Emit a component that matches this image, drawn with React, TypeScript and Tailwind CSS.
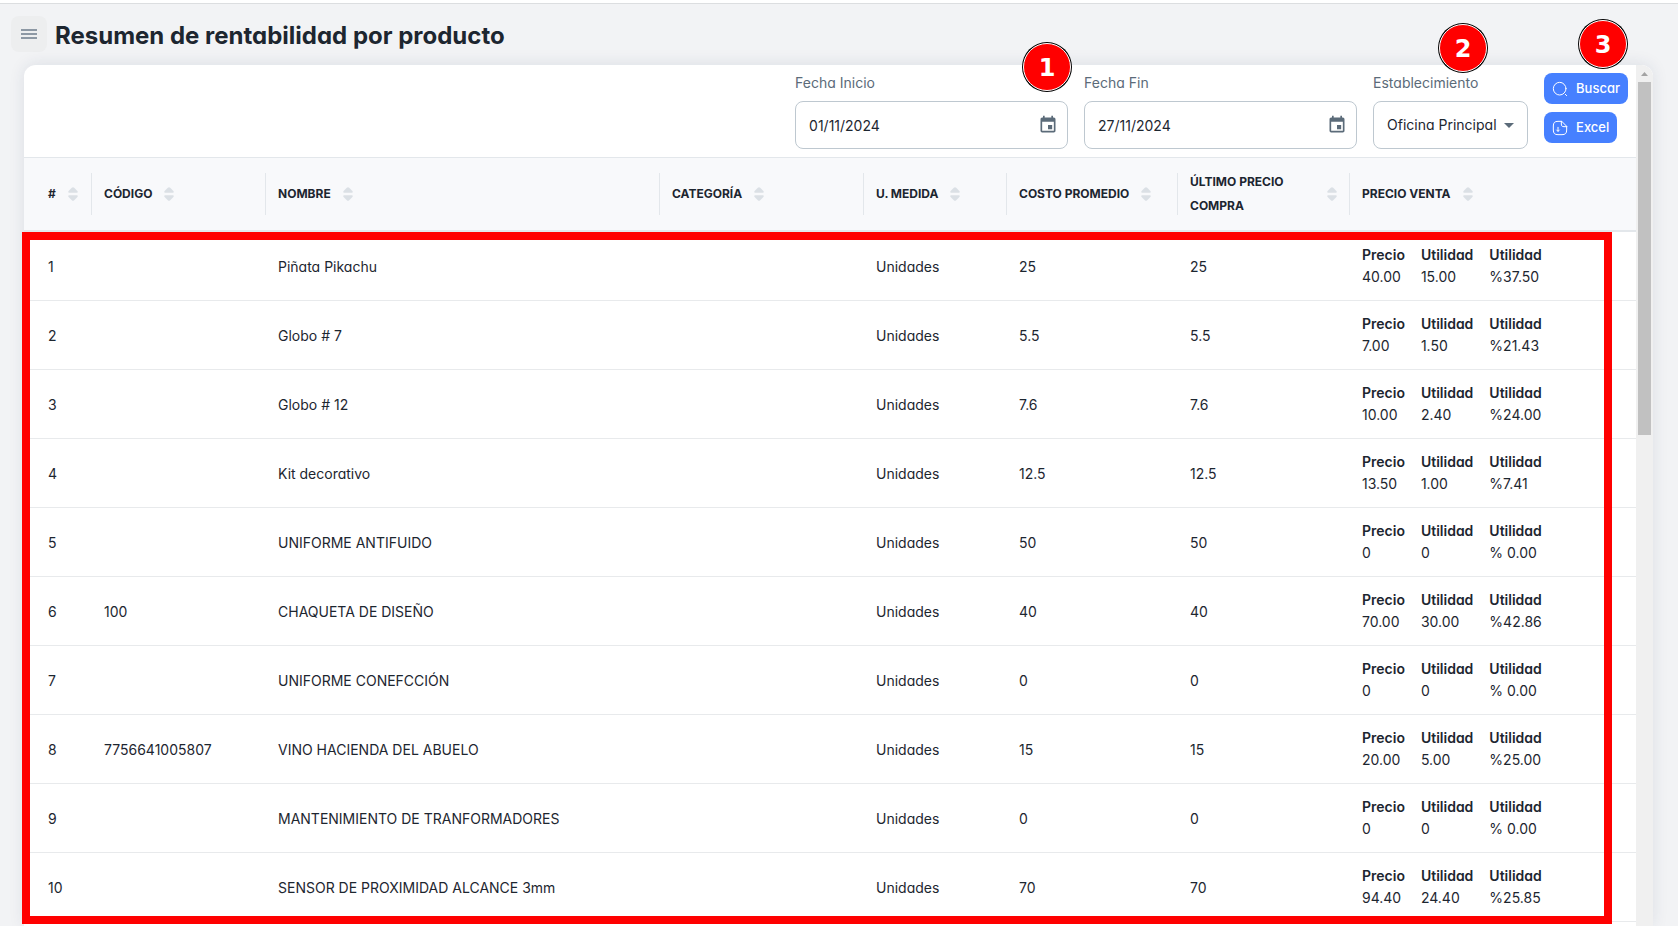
import React from "react";
import { MdArrowDropDown, MdEvent } from "react-icons/md";

type Row = {
  code?: string;
  name: string;
  cost: string;
  last: string;
  price: string;
  profit: string;
  percent: string;
};

const rows: Row[] = [
  { name: "Piñata Pikachu", cost: "25", last: "25", price: "40.00", profit: "15.00", percent: "%37.50" },
  { name: "Globo # 7", cost: "5.5", last: "5.5", price: "7.00", profit: "1.50", percent: "%21.43" },
  { name: "Globo # 12", cost: "7.6", last: "7.6", price: "10.00", profit: "2.40", percent: "%24.00" },
  { name: "Kit decorativo", cost: "12.5", last: "12.5", price: "13.50", profit: "1.00", percent: "%7.41" },
  { name: "UNIFORME ANTIFUIDO", cost: "50", last: "50", price: "0", profit: "0", percent: "% 0.00" },
  { code: "100", name: "CHAQUETA DE DISEÑO", cost: "40", last: "40", price: "70.00", profit: "30.00", percent: "%42.86" },
  { name: "UNIFORME CONEFCCIÓN", cost: "0", last: "0", price: "0", profit: "0", percent: "% 0.00" },
  { code: "7756641005807", name: "VINO HACIENDA DEL ABUELO", cost: "15", last: "15", price: "20.00", profit: "5.00", percent: "%25.00" },
  { name: "MANTENIMIENTO DE TRANFORMADORES", cost: "0", last: "0", price: "0", profit: "0", percent: "% 0.00" },
  { name: "SENSOR DE PROXIMIDAD ALCANCE 3mm", cost: "70", last: "70", price: "94.40", profit: "24.40", percent: "%25.85" },
];

const columns = [
  "#",
  "CÓDIGO",
  "NOMBRE",
  "CATEGORÍA",
  "U. MEDIDA",
  "COSTO PROMEDIO",
  "ÚLTIMO PRECIO COMPRA",
  "PRECIO VENTA",
];

function SortIcon() {
  return (
    <svg width="10" height="14" viewBox="0 0 10 14" fill="#dbe0e5" className="shrink-0" aria-hidden="true">
      <path d="M3.8 .8a1.7 1.7 0 0 1 2.4 0L9.4 4q1 1.6-.6 1.8H1.2Q-.4 5.6.6 4z" />
      <path d="M3.8 13.2a1.7 1.7 0 0 0 2.4 0L9.4 10q1-1.6-.6-1.8H1.2Q-.4 8.4.6 10z" />
    </svg>
  );
}

function SearchIcon() {
  return (
    <svg width="16" height="16" viewBox="0 0 24 24" fill="none" stroke="currentColor" strokeWidth="1.5" strokeLinecap="round" aria-hidden="true">
      <circle cx="11.5" cy="11.5" r="9.5" />
      <path d="M22 22l-2-2" />
    </svg>
  );
}

function DownloadIcon() {
  return (
    <svg width="16" height="16" viewBox="0 0 24 24" fill="none" stroke="currentColor" strokeWidth="1.5" strokeLinecap="round" strokeLinejoin="round" aria-hidden="true">
      <path d="M9 11v6l2-2M9 17l-2-2" />
      <path d="M22 10v5c0 5-2 7-7 7H9c-5 0-7-2-7-7V9c0-5 2-7 7-7h5" />
      <path d="M22 10h-4c-3 0-4-1-4-4V2z" />
    </svg>
  );
}

function Badge({ n, className }: { n: number; className: string }) {
  return (
    <span
      className={`absolute flex size-12 items-center justify-center rounded-full border border-white bg-[#ff0000] pt-0.5 font-['DejaVu_Sans',sans-serif] text-2xl leading-6 font-bold text-white ring-1 ring-black ${className}`}
    >
      {n}
    </span>
  );
}

function DateField({ id, label, value }: { id: string; label: string; value: string }) {
  return (
    <div className="flex w-[273px] flex-col gap-2">
      <label htmlFor={id} className="text-sm leading-5 text-[#5b6b79]">
        {label}
      </label>
      <div className="flex h-12 items-center rounded-lg border border-[#bec8d0] pr-[9px] pl-[13px]">
        <input id={id} type="text" defaultValue={value} className="min-w-0 flex-1 pt-0.5 text-sm text-[#1d2630] outline-none" />
        <button type="button" aria-label={`Abrir calendario: ${label}`} className="text-[#5b6b79]">
          <MdEvent size={20} />
        </button>
      </div>
    </div>
  );
}

function Figure({ label, value }: { label: string; value: string }) {
  return (
    <div>
      <div className="font-semibold">{label}</div>
      <div>{value}</div>
    </div>
  );
}

export default function App() {
  return (
    <div className="flex h-screen flex-col overflow-hidden bg-[#f2f3f5] font-['Inter','Noto_Sans',sans-serif] text-sm text-[#1d2630] [font-feature-settings:'cv11']">
      <div className="h-1 shrink-0 border-b border-[#dcdee0] bg-white" />
      <header className="flex h-15 shrink-0 items-center gap-2 pl-[11px]">
        <button type="button" aria-label="Menú" className="flex size-9 items-center justify-center rounded-lg bg-[#edeeef]">
          <svg width="16" height="12" viewBox="0 0 16 12" stroke="#8d98a4" strokeWidth="2" aria-hidden="true">
            <path d="M0 2h16M0 6h16M0 10h16" />
          </svg>
        </button>
        <h1 className="pt-1 text-2xl leading-8 font-bold">Resumen de rentabilidad por producto</h1>
      </header>

      <main className="mr-[25px] ml-6 flex min-h-0 flex-1 rounded-t-xl border-t border-[#e6e9ed] bg-white shadow-[0_0_16px_rgba(30,50,90,0.10)]">
        <div className="min-w-0 flex-1">
          <div className="flex h-[93px] items-start justify-end gap-4 border-b border-[#e3e7eb] pt-2 pr-2">
            <div className="relative">
              <DateField id="inicio" label="Fecha Inicio" value="01/11/2024" />
              <Badge n={1} className="-top-[30px] -right-[3px]" />
            </div>
            <DateField id="fin" label="Fecha Fin" value="27/11/2024" />
            <div className="relative flex w-[155px] flex-col gap-2">
              <label htmlFor="establecimiento" className="text-sm leading-5 text-[#5b6b79]">
                Establecimiento
              </label>
              <div className="relative">
                <select
                  id="establecimiento"
                  className="h-12 w-full appearance-none rounded-lg border border-[#bec8d0] bg-white pr-6 pl-[13px] text-sm outline-none"
                >
                  <option>Oficina Principal</option>
                </select>
                <MdArrowDropDown size={24} className="pointer-events-none absolute top-3 right-[7px] text-[#5b6b79]" />
              </div>
              <Badge n={2} className="-top-[49px] right-[41px]" />
            </div>
            <div className="relative flex flex-col items-start gap-2">
              <button type="button" className="flex h-[31px] items-center gap-2 rounded-lg bg-[#4680ff] px-2 text-[13px] font-medium text-white">
                <SearchIcon />
                Buscar
              </button>
              <button type="button" className="flex h-[31px] items-center gap-2 rounded-lg bg-[#4680ff] px-2 text-[13px] font-medium text-white">
                <DownloadIcon />
                Excel
              </button>
              <Badge n={3} className="-top-[53px] right-px" />
            </div>
          </div>

          <div className="relative">
            <table className="w-full table-fixed border-separate border-spacing-0 text-left">
              <colgroup>
                <col className="w-[68px]" />
                <col className="w-[174px]" />
                <col />
                <col className="w-[204px]" />
                <col className="w-[143px]" />
                <col className="w-[171px]" />
                <col className="w-[172px]" />
                <col className="w-[286px]" />
              </colgroup>
              <thead>
                <tr className="h-[74px] bg-[#f8f9fb]">
                  {columns.map((c, i) => (
                    <th key={c} scope="col" className="border-b-2 border-[#e3e7eb] p-0">
                      <div
                        className={`flex h-[42px] items-center gap-3 text-xs leading-6 font-bold ${i === 0 ? "pl-6" : "pl-3"} ${
                          i < columns.length - 1 ? "border-r border-[#e3e7eb] pr-3" : ""
                        }`}
                      >
                        <span className={i === 6 ? "flex-1" : ""}>{c}</span>
                        <SortIcon />
                      </div>
                    </th>
                  ))}
                </tr>
              </thead>
              <tbody>
                {rows.map((r, i) => (
                  <tr
                    key={r.name}
                    className="h-[69px] [&>td]:border-b [&>td]:border-[#e8eaec] [&>td]:p-0 [&>td]:pl-3 [&>td:not(:last-child)]:pt-0.5"
                  >
                    <td>
                      <span className="pl-3">{i + 1}</span>
                    </td>
                    <td>{r.code}</td>
                    <td>{r.name}</td>
                    <td></td>
                    <td>Unidades</td>
                    <td>{r.cost}</td>
                    <td>{r.last}</td>
                    <td>
                      <div className="flex gap-4 leading-[22px]">
                        <Figure label="Precio" value={r.price} />
                        <Figure label="Utilidad" value={r.profit} />
                        <Figure label="Utilidad" value={r.percent} />
                      </div>
                    </td>
                  </tr>
                ))}
              </tbody>
            </table>
            <div className="pointer-events-none absolute top-[74px] right-6 -bottom-[2px] -left-[2px] border-8 border-[#ff0000]" />
          </div>
        </div>
        <div className="flex w-[17px] shrink-0 flex-col items-center rounded-tr-xl bg-[#f0f0f0]" aria-hidden="true">
          <svg width="17" height="17" viewBox="0 0 17 17" fill="#a3a3a3">
            <path d="M5 11l3.5-4 3.5 4z" />
          </svg>
          <div className="h-[353px] w-[13px] bg-[#c1c1c1]" />
        </div>
      </main>
    </div>
  );
}
